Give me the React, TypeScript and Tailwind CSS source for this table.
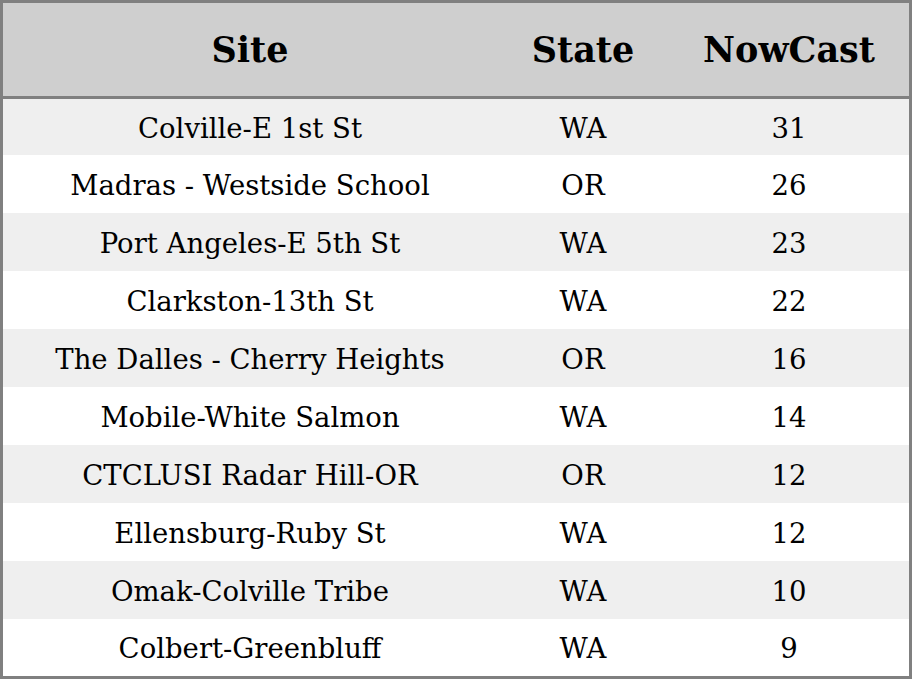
const rows = [
  { site: "Colville-E 1st St", state: "WA", nowcast: 31 },
  { site: "Madras - Westside School", state: "OR", nowcast: 26 },
  { site: "Port Angeles-E 5th St", state: "WA", nowcast: 23 },
  { site: "Clarkston-13th St", state: "WA", nowcast: 22 },
  { site: "The Dalles - Cherry Heights", state: "OR", nowcast: 16 },
  { site: "Mobile-White Salmon", state: "WA", nowcast: 14 },
  { site: "CTCLUSI Radar Hill-OR", state: "OR", nowcast: 12 },
  { site: "Ellensburg-Ruby St", state: "WA", nowcast: 12 },
  { site: "Omak-Colville Tribe", state: "WA", nowcast: 10 },
  { site: "Colbert-Greenbluff", state: "WA", nowcast: 9 },
];

export default function App() {
  return (
    <div className="w-[912px] h-[679px] bg-white font-['DejaVu_Serif',serif] text-black">
      <div className="border-[3px] border-[#808080] h-[679px] flex flex-col">
        <div className="h-[91px] pt-[2px] box-content shrink-0 bg-[#cfcfcf] border-b-[3px] border-[#808080] grid grid-cols-[494px_172px_1fr] items-center text-[35px] font-bold">
          <div className="text-center">Site</div>
          <div className="text-center">State</div>
          <div className="text-center">NowCast</div>
        </div>
        {rows.map((r, i) => (
          <div
            key={r.site}
            className={`grid grid-cols-[494px_172px_1fr] items-center text-[27.5px] pt-[3px] ${
              i % 2 === 0 ? "bg-[#efefef]" : "bg-white"
            } ${i === 0 ? "h-[56px]" : i === rows.length - 1 ? "h-[57px]" : "h-[58px]"}`}
          >
            <div className="text-center">{r.site}</div>
            <div className="text-center">{r.state}</div>
            <div className="text-center">{r.nowcast}</div>
          </div>
        ))}
      </div>
    </div>
  );
}
